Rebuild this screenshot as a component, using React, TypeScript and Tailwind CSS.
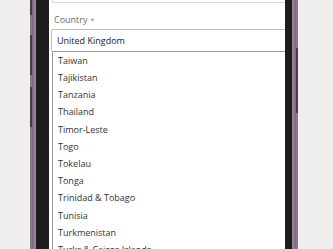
const countries = [
  'Taiwan',
  'Tajikistan',
  'Tanzania',
  'Thailand',
  'Timor-Leste',
  'Togo',
  'Tokelau',
  'Tonga',
  'Trinidad & Tobago',
  'Tunisia',
  'Turkmenistan',
  'Turks & Caicos Islands',
]

export default function App() {
  return (
    <div
      className="flex h-[249px] w-[333px] overflow-hidden bg-[#efeeed]"
      style={{ fontFamily: '"Open Sans", "Noto Sans", sans-serif' }}
    >
      <div className="w-[30px] shrink-0" />
      {/* left frame edge with side buttons */}
      <div className="flex w-[6px] shrink-0">
        <div className="flex w-[2px] flex-col bg-[#8a7690]">
          <div className="h-[15px] bg-[#4b3850]" />
          <div className="h-[20px]" />
          <div className="h-[40px] bg-[#4b3850]" />
          <div className="h-[12px]" />
          <div className="h-[40px] bg-[#4b3850]" />
        </div>
        <div className="w-[4px] bg-gradient-to-r from-[#7c6782] to-[#9c8aa0]" />
      </div>
      <div className="w-[13px] shrink-0 bg-[#1e1e1e]" />

      {/* screen */}
      <div className="w-[236px] shrink-0 overflow-hidden bg-white">
        <div className="w-[280px] pl-[2px]">
          <div className="ml-[1px] h-[3px] border-b border-l border-[#d9d9d9]" />
          <div className="mt-[11px] flex h-[12px] items-center pl-[3px] text-[9px] text-[#766b63]">
            Country
            <span className="ml-[3px] text-[7px] leading-none text-[#e0564c]">*</span>
          </div>
          <div className="mt-[3px] flex h-[22px] items-center rounded-tl-[2px] border border-b-0 border-[#a3c6dd] pl-[5px] text-[9px] text-[#222]">
            United Kingdom
          </div>
          <div className="ml-[1px] border-l border-t border-[#9a9a9a]">
            {countries.map((c) => (
              <div
                key={c}
                className="flex h-[17.2px] items-center pl-[5px] text-[9px] text-[#333]"
              >
                {c}
              </div>
            ))}
          </div>
        </div>
      </div>

      <div className="w-[7px] shrink-0 bg-[#1e1e1e]" />
      {/* right frame edge */}
      <div className="flex w-[6px] shrink-0">
        <div className="w-[4px] bg-gradient-to-r from-[#9c8aa0] to-[#7c6782]" />
        <div className="flex w-[2px] flex-col">
          <div className="h-[48px] bg-[#8a7690]" />
          <div className="h-[65px] bg-[#4b3850]" />
          <div className="flex-1 bg-[#8a7690]" />
        </div>
      </div>
      <div className="flex-1" />
    </div>
  )
}
